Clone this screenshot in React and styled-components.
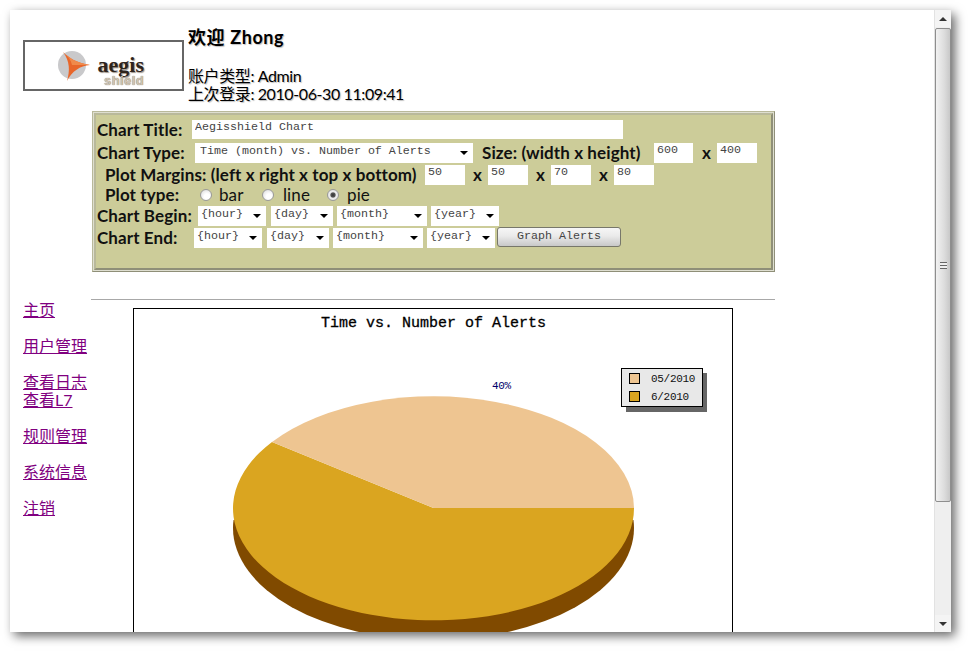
import React from "react";
import styled, { createGlobalStyle } from "styled-components";

const Global = createGlobalStyle`
  html, body {
    margin: 0;
    height: 100%;
    overflow: hidden;
    background: #fff;
  }
`;

const sans = `"Lato", "Noto Sans CJK SC", sans-serif`;
const mono = `"Liberation Mono", monospace`;

const Window = styled.div`
  margin: 10px 0 0 10px;
  width: 941px;
  height: 622px;
  display: flex;
  background: #fff;
  box-shadow: 4px 4px 10px rgba(0, 0, 0, 0.6);
`;

const Viewport = styled.div`
  flex: 1;
  min-width: 0;
  overflow: hidden;
  padding-left: 13px;
`;

const Header = styled.header`
  display: flex;
  height: 101px;
  gap: 4px;
`;

const Logo = styled.div`
  box-sizing: border-box;
  width: 161px;
  height: 51px;
  margin-top: 30px;
  border: 2px solid #666;
  display: flex;
  align-items: center;
  gap: 5px;
  padding-left: 33px;
`;

const LogoWords = styled.div`
  display: flex;
  flex-direction: column;
  align-items: flex-end;
  width: 48px;
  padding-top: 10px;
`;

const LogoName = styled.span`
  font: bold 22px/21px "Liberation Serif", serif;
  color: #2e241c;
  text-shadow: 1px 1px 1px rgba(60, 40, 20, 0.5);
`;

const LogoSub = styled.span`
  font: bold 13px/12px "Liberation Sans", sans-serif;
  color: #cfc4b4;
  text-shadow: 0 0 1px #6b5a48;
  letter-spacing: 0.4px;
`;

const Welcome = styled.div`
  font-family: ${sans};
  color: #000;
  text-shadow: 1px 1px 1px rgba(0, 0, 0, 0.25);
`;

const Greeting = styled.h2`
  margin: 16px 0 19px;
  font-size: 18px;
  line-height: 22px;
  font-weight: 700;
  letter-spacing: 0.6px;
`;

const InfoLine = styled.div`
  font-size: 16px;
  line-height: 18px;
  letter-spacing: -0.4px;
  white-space: nowrap;
`;

const Body = styled.div`
  display: grid;
  grid-template-columns: 69px 683px;
`;

const Sidebar = styled.nav`
  padding-top: 190px;
  font-family: ${sans};
  font-size: 16px;
  line-height: 18px;
`;

const NavGroup = styled.div`
  margin-bottom: 18px;
`;

const NavLink = styled.a`
  display: table;
  color: #800080;
  text-decoration: underline;
`;

const Panel = styled.form`
  box-sizing: border-box;
  height: 161px;
  padding: 3px 0 0 1px;
  border: 4px solid;
  border-color: #b9b99a #8f8f78 #8f8f78 #b9b99a;
  outline: 1px solid #deded0;
  outline-offset: -2px;
  background: #cccc99;
  font-family: ${sans};
  font-size: 17px;
  line-height: 18px;
  letter-spacing: 0.1px;
  font-weight: 700;
  color: #111;
`;

const Row = styled.div`
  display: flex;
  align-items: center;
  height: ${(p) => p.$h}px;
  padding-left: ${(p) => p.$indent || 0}px;
`;

const Label = styled.label`
  flex: none;
  width: ${(p) => p.$w}px;
  margin-left: ${(p) => p.$ml || 0}px;
  white-space: nowrap;
  font-weight: ${(p) => (p.$plain ? 400 : 700)};
`;

const field = `
  box-sizing: border-box;
  flex: none;
  border: 0;
  border-radius: 0;
  background: #fff;
  font-family: ${mono};
  font-size: 11.67px;
  letter-spacing: 0;
  color: #444;
  outline: none;
`;

const TextField = styled.input`
  ${field}
  width: ${(p) => p.$w}px;
  height: ${(p) => p.$h || 20}px;
  margin-left: ${(p) => p.$ml || 0}px;
  padding: 0 0 5px ${(p) => p.$pad || 3}px;
`;

const SelectWrap = styled.span`
  position: relative;
  flex: none;
  display: block;
  width: ${(p) => p.$w}px;
  height: 20px;
  margin-left: ${(p) => p.$ml || 0}px;

  &::after {
    content: "";
    position: absolute;
    right: 5px;
    top: 8px;
    border-style: solid;
    border-width: 4px 4px 0;
    border-color: #000 transparent transparent;
    pointer-events: none;
  }
`;

const Select = styled.select`
  ${field}
  appearance: none;
  display: block;
  width: 100%;
  height: 100%;
  padding: 0 0 4px ${(p) => p.$pad || 3}px;
`;

const Radio = styled.input.attrs({ type: "radio" })`
  appearance: none;
  box-sizing: border-box;
  flex: none;
  width: 12px;
  height: 12px;
  margin: 0 0 0 ${(p) => p.$ml || 0}px;
  border: 1px solid #9a9a9a;
  border-radius: 50%;
  background: radial-gradient(circle at 60% 65%, #fff 30%, #d6d6d6 100%);

  &:checked {
    background: radial-gradient(circle, #333 0, #555 30%, #eee 45%, #ddd 100%);
  }
`;

const GraphButton = styled.button`
  box-sizing: border-box;
  flex: none;
  width: 124px;
  height: 20px;
  margin: -2px 0 0 2px;
  padding: 0 0 3px;
  border: 1px solid #77776a;
  border-radius: 3px;
  background: linear-gradient(#f6f6f6, #eaeaea 45%, #c8c8c8);
  font-family: ${mono};
  font-size: 11.67px;
  letter-spacing: 0;
  color: #444;
`;

const Divider = styled.hr`
  height: 1px;
  margin: 27px 0 8px -1px;
  border: 0;
  background: #a8a8a8;
`;

const Chart = styled.div`
  box-sizing: border-box;
  width: 600px;
  height: 400px;
  margin-left: 41px;
  border: 1px solid #000;
  background: #fff;
`;

const ChartSvg = styled.svg`
  display: block;
`;

const ChartTitle = styled.text`
  font: 15px ${mono};
  font-weight: 400;
  stroke: #000;
  stroke-width: 0.3px;
`;

const ChartNote = styled.text`
  font: 11px ${mono};
  letter-spacing: -0.3px;
  fill: ${(p) => p.$color};
`;

const Scrollbar = styled.aside`
  flex: none;
  width: 17px;
  display: flex;
  flex-direction: column;
  background: #efefef;
  border-left: 1px solid #e2e2e2;
  box-sizing: border-box;
`;

const ScrollButton = styled.div`
  flex: none;
  height: 17px;
  background: #f4f4f4;
  display: flex;
  align-items: center;
  justify-content: center;

  &::before {
    content: "";
    border-style: solid;
    border-color: transparent;
    border-width: ${(p) => (p.$down ? "4px 4px 0" : "0 4px 4px")};
    ${(p) => (p.$down ? "border-top-color: #333;" : "border-bottom-color: #333;")}
  }
`;

const Thumb = styled.div`
  flex: none;
  box-sizing: border-box;
  height: 474px;
  margin-top: 1px;
  border: 1px solid #8e8e8e;
  border-radius: 2px;
  background: linear-gradient(90deg, #f2f2f2, #dcdcdc 60%, #c8c8c8);
  display: flex;
  align-items: center;
  justify-content: center;
`;

const Grip = styled.div`
  width: 7px;
  height: 7px;
  background: repeating-linear-gradient(#666 0 1px, #eee 1px 3px);
`;

const ScrollTrack = styled.div`
  flex: 1;
`;

function Pick({ w, ml, pad, label }) {
  return (
    <SelectWrap $w={w} $ml={ml}>
      <Select $pad={pad} defaultValue={label}>
        <option>{label}</option>
      </Select>
    </SelectWrap>
  );
}

function DateRow({ title, labelW, offset, h, children }) {
  return (
    <Row $h={h}>
      <Label $w={labelW}>{title}</Label>
      <Pick w={68} ml={offset} label="{hour}" />
      <Pick w={62} ml={5} label="{day}" />
      <Pick w={90} ml={4} label="{month}" />
      <Pick w={68} ml={4} label="{year}" />
      {children}
    </Row>
  );
}

function LogoMark() {
  return (
    <svg width="33" height="33" viewBox="0 0 33 33">
      <circle cx="14" cy="16" r="14" fill="#c9c9cb" />
      <path d="M5 3 C10 8 18 14 32 16 C22 17 14 22 9 32 C12 22 12 12 5 3 Z" fill="#e8662a" />
      <path d="M5 3 C10 8 18 14 32 16 L14 16 C13 11 10 7 5 3 Z" fill="#f08a4b" />
    </svg>
  );
}

function PieChart() {
  // chart is 598x398 inside the border, so page coords are offset by 134,309
  return (
    <ChartSvg width="598" height="398" viewBox="134 309 598 398">
      <defs>
        <clipPath id="rim">
          <rect x="134" y="520" width="598" height="190" />
        </clipPath>
      </defs>
      <ChartTitle x="321" y="327">Time vs. Number of Alerts</ChartTitle>
      <ChartNote x="492" y="389" $color="#00006a">40%</ChartNote>

      <ellipse cx="433.5" cy="528" rx="200.5" ry="112" fill="#804a00" clipPath="url(#rim)" />
      <path d="M433.5 508 L634 508 A200.5 112 0 1 1 272 442 Z" fill="#daa520" />
      <path d="M433.5 508 L634 508 A200.5 112 0 0 0 272 442 Z" fill="#eec591" />

      <rect x="626" y="373" width="81" height="39" fill="#666" />
      <rect x="621.5" y="368.5" width="81" height="38" fill="#e8e8e8" stroke="#000" />
      <rect x="629.5" y="373.5" width="10" height="10" fill="#eec591" stroke="#000" />
      <rect x="629.5" y="391.5" width="10" height="10" fill="#daa520" stroke="#000" />
      <ChartNote x="651" y="382" $color="#111">05/2010</ChartNote>
      <ChartNote x="651" y="400" $color="#111">6/2010</ChartNote>
    </ChartSvg>
  );
}

export default function App() {
  return (
    <>
      <Global />
      <Window>
        <Viewport>
          <Header>
            <Logo>
              <LogoMark />
              <LogoWords>
                <LogoName>aegis</LogoName>
                <LogoSub>shield</LogoSub>
              </LogoWords>
            </Logo>
            <Welcome>
              <Greeting>欢迎 Zhong</Greeting>
              <InfoLine>账户类型: Admin</InfoLine>
              <InfoLine>上次登录: 2010-06-30 11:09:41</InfoLine>
            </Welcome>
          </Header>
          <Body>
            <Sidebar>
              <NavGroup><NavLink href="#">主页</NavLink></NavGroup>
              <NavGroup><NavLink href="#">用户管理</NavLink></NavGroup>
              <NavGroup>
                <NavLink href="#">查看日志</NavLink>
                <NavLink href="#">查看L7</NavLink>
              </NavGroup>
              <NavGroup><NavLink href="#">规则管理</NavLink></NavGroup>
              <NavGroup><NavLink href="#">系统信息</NavLink></NavGroup>
              <NavGroup><NavLink href="#">注销</NavLink></NavGroup>
            </Sidebar>
            <main>
              <Panel onSubmit={(e) => e.preventDefault()}>
                <Row $h={23}>
                  <Label $w={95}>Chart Title:</Label>
                  <TextField $w={431} $h={19} defaultValue="Aegisshield Chart" />
                </Row>
                <Row $h={23}>
                  <Label $w={98}>Chart Type:</Label>
                  <Pick w={278} pad={5} label="Time (month) vs. Number of Alerts" />
                  <Label $w={172} $ml={9}>Size: (width x height)</Label>
                  <TextField $w={39} defaultValue="600" />
                  <Label $w={15} $ml={9}>x</Label>
                  <TextField $w={40} defaultValue="400" />
                </Row>
                <Row $h={21} $indent={8}>
                  <Label $w={320}>Plot Margins: (left x right x top x bottom)</Label>
                  <TextField $w={40} defaultValue="50" />
                  <Label $w={15} $ml={8}>x</Label>
                  <TextField $w={40} defaultValue="50" />
                  <Label $w={15} $ml={8}>x</Label>
                  <TextField $w={40} defaultValue="70" />
                  <Label $w={15} $ml={8}>x</Label>
                  <TextField $w={40} defaultValue="80" />
                </Row>
                <Row $h={20} $indent={8}>
                  <Label $w={95}>Plot type:</Label>
                  <Radio name="plot" />
                  <Label $w={31} $ml={7} $plain>bar</Label>
                  <Radio name="plot" $ml={12} />
                  <Label $w={32} $ml={9} $plain>line</Label>
                  <Radio name="plot" $ml={12} defaultChecked />
                  <Label $w={30} $ml={8} $plain>pie</Label>
                </Row>
                <DateRow title="Chart Begin:" labelW={96} offset={5} h={22} />
                <DateRow title="Chart End:" labelW={80} offset={17} h={22}>
                  <GraphButton type="button">Graph Alerts</GraphButton>
                </DateRow>
              </Panel>
              <Divider />
              <Chart>
                <PieChart />
              </Chart>
            </main>
          </Body>
        </Viewport>
        <Scrollbar>
          <ScrollButton />
          <Thumb><Grip /></Thumb>
          <ScrollTrack />
          <ScrollButton $down />
        </Scrollbar>
      </Window>
    </>
  );
}
